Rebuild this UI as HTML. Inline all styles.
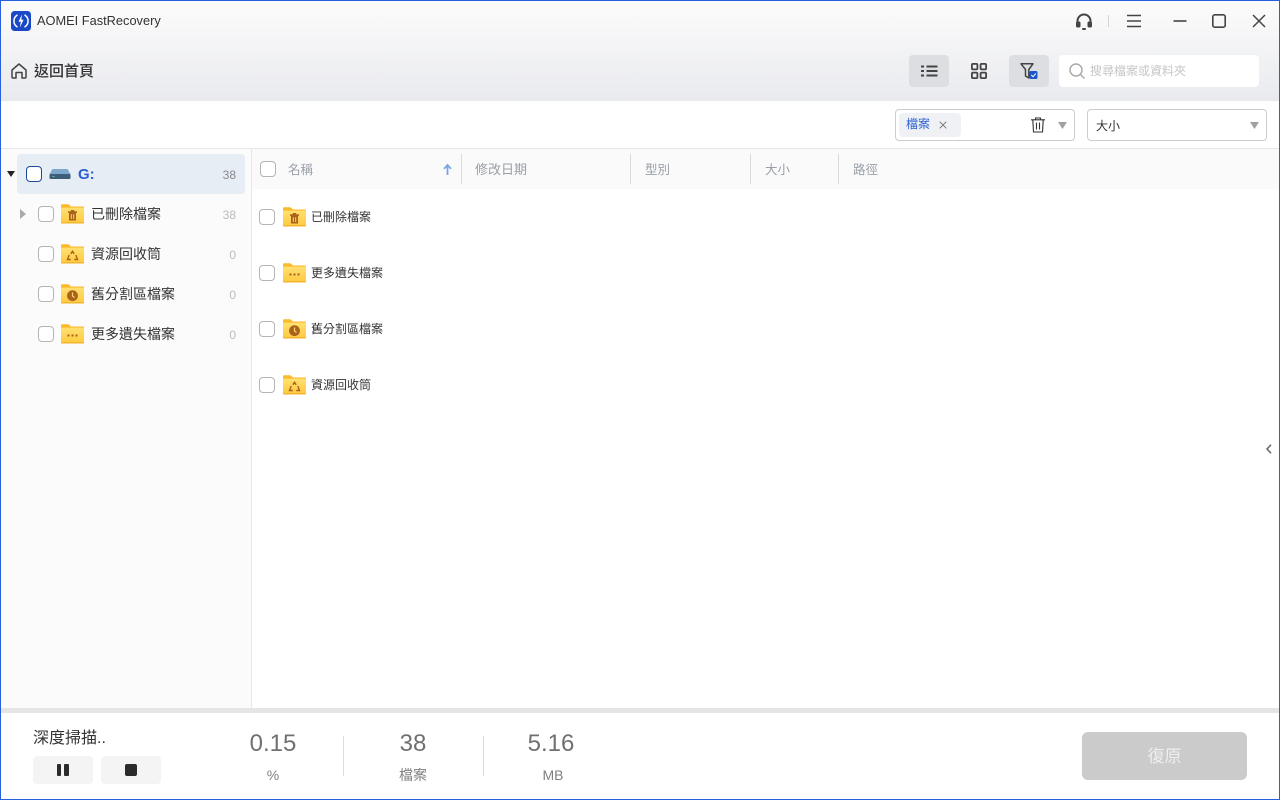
<!DOCTYPE html>
<html lang="zh-Hant"><head><meta charset="utf-8"><title>AOMEI FastRecovery</title>
<style>
*{box-sizing:border-box}
html,body{margin:0;padding:0;width:1280px;height:800px;overflow:hidden;background:#fff}
body{position:relative;font-family:"Liberation Sans","Noto Sans CJK TC",sans-serif;color:#333}
.a{position:absolute;white-space:nowrap}
.cb{position:absolute;width:16px;height:16px;border:1px solid #b4b4b4;border-radius:4px;background:#fff}
.t{position:absolute;white-space:nowrap;font-size:14px;line-height:20px;color:#333}
.r{position:absolute;white-space:nowrap;font-size:12px;line-height:20px;color:#333}
.n{position:absolute;right:1044px;font-size:12px;line-height:16px;color:#aaa;text-align:right}
.h{position:absolute;top:160px;font-size:13px;line-height:20px;color:#9aa0a8;white-space:nowrap}
.sep{position:absolute;top:154px;width:1px;height:30px;background:#d8dbe0}
.big{position:absolute;width:100px;text-align:center;font-size:24px;line-height:30px;color:#707070}
.sm{position:absolute;width:100px;text-align:center;font-size:14px;line-height:20px;color:#808080}
svg{position:absolute;display:block;overflow:visible}
</style></head><body>
<svg width="0" height="0" style="position:absolute"><defs>
<linearGradient id="fg" x1="0" y1="0" x2="0" y2="1"><stop offset="0" stop-color="#ffe070"/><stop offset="1" stop-color="#ffc93f"/></linearGradient>
<g id="fd"><path d="M0 1.500Q0 .3 1.200 .3H7.500L10 2.500H21.800Q23 2.500 23 3.700V18Q23 19.500 21.500 19.500H1.500Q0 19.500 0 18Z" fill="#fbb92c"/><path d="M0 3.600H21.800Q23 3.600 23 4.800V18Q23 19.500 21.500 19.500H1.500Q0 19.500 0 18Z" fill="url(#fg)"/><path d="M0 18.200H23Q23 19.500 21.500 19.500H1.500Q0 19.500 0 18.200Z" fill="#f3b02a"/></g>
<g id="tr"><use href="#fd"/><rect x="7" y="7.300" width="9" height="1.500" fill="#a9621b"/><rect x="9.800" y="6" width="3.400" height="1.600" fill="#a9621b"/><path d="M8 8.500H15V16.500H8Z" fill="#a9621b"/><path d="M10.300 10.300V15M12.700 10.300V15" stroke="#ffd968" stroke-width="1"/></g>
<g id="re"><use href="#fd"/><path d="M9.800 9.800L11.500 7.300L13.200 9.800M14.800 11L16.500 15.500H13.300M9.800 15.500H6.500L8.200 11" fill="none" stroke="#a9621b" stroke-width="1.400"/></g>
<g id="cl"><use href="#fd"/><circle cx="11.500" cy="11.700" r="5.400" fill="#a9621b"/><path d="M11.500 8.500V12L13.500 13.500" fill="none" stroke="#ffd968" stroke-width="1.200"/></g>
<g id="mo"><use href="#fd"/><rect x="6.500" y="10.500" width="2" height="2" fill="#a9621b"/><rect x="10.500" y="10.500" width="2" height="2" fill="#a9621b"/><rect x="14.500" y="10.500" width="2" height="2" fill="#a9621b"/></g>
</defs></svg>

<!-- header -->
<div class="a" style="left:0;top:0;width:1280px;height:101px;background:linear-gradient(#fcfcfc,#e9eaee)"></div>
<svg style="left:11px;top:11px" width="20" height="20" viewBox="0 0 20 20"><rect width="20" height="20" rx="3.500" fill="#1a49c8"/><path d="M6 4.200A7 7 0 0 0 6 15.800M14 4.200A7 7 0 0 1 14 15.800" fill="none" stroke="#fff" stroke-width="1.500" stroke-linecap="round"/><path d="M11 3.500L7.500 10.800H9.800L8.800 16.500L12.600 8.800H10.300Z" fill="#fff"/></svg>
<div class="a" style="left:37px;top:11px;font-size:12.800px;line-height:20px;color:#333">AOMEI FastRecovery</div>
<svg style="left:11px;top:63px" width="16" height="16" viewBox="0 0 16 16"><path d="M1 7L8 1L15 7V14A1 1 0 0 1 14 15H11V9.500H5V15H2A1 1 0 0 1 1 14Z" fill="none" stroke="#444" stroke-width="1.500" stroke-linejoin="round"/></svg>
<div class="a" style="left:34px;top:62px;font-size:15px;line-height:20px;font-weight:500;color:#333">返回首頁</div>

<svg style="left:1075px;top:13px" width="18" height="18" viewBox="0 0 18 18"><path d="M2.500 10V8A6.500 6.500 0 0 1 15.500 8V10" fill="none" stroke="#444" stroke-width="2"/><rect x="1" y="8.500" width="4.500" height="6" rx="1.500" fill="#444"/><rect x="12.500" y="8.500" width="4.500" height="6" rx="1.500" fill="#444"/><rect x="7" y="15" width="4" height="2" rx="1" fill="#444"/></svg>
<div class="a" style="left:1108px;top:15px;width:1px;height:12px;background:#d5d5d5"></div>
<svg style="left:1126px;top:14px" width="16" height="14" viewBox="0 0 16 14"><path d="M1 1.500H15M1 7H15M1 12.500H15" stroke="#444" stroke-width="1.500"/></svg>
<svg style="left:1172px;top:20px" width="16" height="2" viewBox="0 0 16 2"><path d="M1.500 1H14.500" stroke="#444" stroke-width="1.600"/></svg>
<svg style="left:1212px;top:14px" width="14" height="14" viewBox="0 0 14 14"><rect x=".8" y=".8" width="12.400" height="12.400" rx="2" fill="none" stroke="#444" stroke-width="1.600"/></svg>
<svg style="left:1252px;top:14px" width="14" height="14" viewBox="0 0 14 14"><path d="M1 1L13 13M13 1L1 13" stroke="#444" stroke-width="1.500"/></svg>

<div class="a" style="left:909px;top:55px;width:40px;height:32px;background:#dcdee1;border-radius:4px"></div>
<svg style="left:921px;top:65px" width="17" height="12" viewBox="0 0 17 12"><path d="M0 1.500H3M0 6H3M0 10.500H3M5.500 1.500H16.500M5.500 6H16.500M5.500 10.500H16.500" stroke="#444" stroke-width="2"/></svg>
<svg style="left:971px;top:63px" width="16" height="16" viewBox="0 0 16 16"><g fill="none" stroke="#444" stroke-width="1.800"><rect x=".9" y=".9" width="5.500" height="5.500" rx="1"/><rect x="9.600" y=".9" width="5.500" height="5.500" rx="1"/><rect x=".9" y="9.600" width="5.500" height="5.500" rx="1"/><rect x="9.600" y="9.600" width="5.500" height="5.500" rx="1"/></g></svg>
<div class="a" style="left:1009px;top:55px;width:40px;height:32px;background:#dcdee1;border-radius:4px"></div>
<svg style="left:1020px;top:63px" width="19" height="17" viewBox="0 0 19 17"><path d="M1 .8H13L8.800 6.500V15L5.500 13V6.500Z" fill="none" stroke="#444" stroke-width="1.500" stroke-linejoin="round"/><rect x="9.500" y="8" width="8" height="8" rx="1.500" fill="#1f55cc"/><path d="M11.300 12L13 13.700L15.800 10.500" fill="none" stroke="#fff" stroke-width="1"/></svg>
<div class="a" style="left:1059px;top:55px;width:200px;height:32px;background:#fff;border-radius:4px"></div>
<svg style="left:1069px;top:63px" width="17" height="17" viewBox="0 0 17 17"><circle cx="7" cy="7" r="6" fill="none" stroke="#aaa" stroke-width="1.500"/><path d="M11.500 11.500L15.500 15.500" stroke="#aaa" stroke-width="1.500"/></svg>
<div class="a" style="left:1090px;top:62px;font-size:12px;line-height:18px;color:#c6c6c6">搜尋檔案或資料夾</div>

<!-- filter row -->
<div class="a" style="left:895px;top:109px;width:180px;height:32px;border:1px solid #ccc;border-radius:4px;background:#fff"></div>
<div class="a" style="left:899px;top:113px;width:62px;height:24px;background:#eff1f5;border-radius:4px"></div>
<div class="a" style="left:906px;top:116px;font-size:12px;line-height:17px;color:#2a5fd0">檔案</div>
<svg style="left:939px;top:121px" width="8" height="8" viewBox="0 0 8 8"><path d="M.7 .7L7.300 7.300M7.300 .7L.7 7.300" stroke="#777" stroke-width="1"/></svg>
<svg style="left:1031px;top:117px" width="14" height="16" viewBox="0 0 14 16"><path d="M0 2.800H14M4.500 2.800V1H9.500V2.800M1.800 2.800L2.500 15H11.500L12.200 2.800M5.500 5.500V12.500M8.500 5.500V12.500" fill="none" stroke="#333" stroke-width="1.100"/></svg>
<svg style="left:1058px;top:122px" width="9" height="7" viewBox="0 0 9 7"><path d="M0 0H9L4.500 7Z" fill="#a0a0a0"/></svg>
<div class="a" style="left:1087px;top:109px;width:180px;height:32px;border:1px solid #ccc;border-radius:4px;background:#fff"></div>
<div class="a" style="left:1096px;top:117px;font-size:12px;line-height:18px;color:#333">大小</div>
<svg style="left:1250px;top:122px" width="9" height="7" viewBox="0 0 9 7"><path d="M0 0H9L4.500 7Z" fill="#a0a0a0"/></svg>
<div class="a" style="left:0;top:148px;width:1280px;height:1px;background:#e6e7ee"></div>

<!-- sidebar -->
<div class="a" style="left:0;top:149px;width:252px;height:560px;background:#fbfbfb;border-right:1px solid #e6e7ee"></div>
<div class="a" style="left:17px;top:154px;width:228px;height:40px;background:#e7edf5;border-radius:4px"></div>
<svg style="left:7px;top:171px" width="8" height="6" viewBox="0 0 8 6"><path d="M0 0H8L4 6Z" fill="#222"/></svg>
<div class="cb" style="left:26px;top:166px;border-color:#1c4a9c"></div>
<svg style="left:49px;top:169px" width="22" height="10" viewBox="0 0 22 10"><path d="M3.500 0H18.500L21.500 5H.5Z" fill="#7fa9cc"/><rect x=".5" y="5" width="21" height="5" rx="1" fill="#3d5d78"/><rect x="3.500" y="7" width="2" height="1" fill="#4fd0a0"/></svg>
<div class="a" style="left:78px;top:165px;font-size:15px;line-height:20px;font-weight:bold;color:#2a5fd0">G:</div>
<div class="n" style="top:167px;color:#888">38</div>

<svg style="left:20px;top:209px" width="6" height="10" viewBox="0 0 6 10"><path d="M0 0L6 5L0 10Z" fill="#aaa"/></svg>
<div class="cb" style="left:38px;top:206px"></div>
<svg style="left:61px;top:204px" width="23" height="20" viewBox="0 0 23 20"><use href="#tr"/></svg>
<div class="t" style="left:91px;top:204px">已刪除檔案</div><div class="n" style="top:207px;color:#bbb">38</div>

<div class="cb" style="left:38px;top:246px"></div>
<svg style="left:61px;top:244px" width="23" height="20" viewBox="0 0 23 20"><use href="#re"/></svg>
<div class="t" style="left:91px;top:244px">資源回收筒</div><div class="n" style="top:247px;color:#bbb">0</div>

<div class="cb" style="left:38px;top:286px"></div>
<svg style="left:61px;top:284px" width="23" height="20" viewBox="0 0 23 20"><use href="#cl"/></svg>
<div class="t" style="left:91px;top:284px">舊分割區檔案</div><div class="n" style="top:287px;color:#bbb">0</div>

<div class="cb" style="left:38px;top:326px"></div>
<svg style="left:61px;top:324px" width="23" height="20" viewBox="0 0 23 20"><use href="#mo"/></svg>
<div class="t" style="left:91px;top:324px">更多遺失檔案</div><div class="n" style="top:327px;color:#bbb">0</div>

<!-- table head -->
<div class="a" style="left:252px;top:149px;width:1027px;height:40px;background:#fafafa"></div>
<div class="cb" style="left:260px;top:161px"></div>
<div class="h" style="left:288px;font-size:12.500px">名稱</div>
<svg style="left:443px;top:164px" width="9" height="11" viewBox="0 0 9 11"><path d="M4.500 11V2M1 4.800L4.500 1L8 4.800" fill="none" stroke="#7ba7e0" stroke-width="1.800"/></svg>
<div class="sep" style="left:461px"></div><div class="h" style="left:475px">修改日期</div>
<div class="sep" style="left:630px"></div><div class="h" style="left:645px;font-size:12.500px">型別</div>
<div class="sep" style="left:750px"></div><div class="h" style="left:765px;font-size:12.500px">大小</div>
<div class="sep" style="left:838px"></div><div class="h" style="left:853px;font-size:12.500px">路徑</div>

<!-- rows -->
<div class="cb" style="left:259px;top:209px"></div>
<svg style="left:283px;top:207px" width="23" height="20" viewBox="0 0 23 20"><use href="#tr"/></svg>
<div class="r" style="left:311px;top:207px">已刪除檔案</div>
<div class="cb" style="left:259px;top:265px"></div>
<svg style="left:283px;top:263px" width="23" height="20" viewBox="0 0 23 20"><use href="#mo"/></svg>
<div class="r" style="left:311px;top:263px">更多遺失檔案</div>
<div class="cb" style="left:259px;top:321px"></div>
<svg style="left:283px;top:319px" width="23" height="20" viewBox="0 0 23 20"><use href="#cl"/></svg>
<div class="r" style="left:311px;top:319px">舊分割區檔案</div>
<div class="cb" style="left:259px;top:377px"></div>
<svg style="left:283px;top:375px" width="23" height="20" viewBox="0 0 23 20"><use href="#re"/></svg>
<div class="r" style="left:311px;top:375px">資源回收筒</div>

<svg style="left:1266px;top:444px" width="6" height="10" viewBox="0 0 6 10"><path d="M5 .8L1 5L5 9.200" fill="none" stroke="#666" stroke-width="1.500"/></svg>

<!-- footer -->
<div class="a" style="left:0;top:708px;width:1280px;height:5px;background:#e5e5e5"></div>
<div class="a" style="left:33px;top:728px;font-size:16px;line-height:22px;color:#333">深度掃描..</div>
<div class="a" style="left:33px;top:756px;width:60px;height:28px;background:#f4f4f4;border-radius:4px"></div>
<div class="a" style="left:57px;top:764px;width:4px;height:12px;background:#2b2b2b;border-radius:1px"></div>
<div class="a" style="left:64px;top:764px;width:5px;height:12px;background:#2b2b2b;border-radius:1px"></div>
<div class="a" style="left:101px;top:756px;width:60px;height:28px;background:#f4f4f4;border-radius:4px"></div>
<div class="a" style="left:125px;top:764px;width:12px;height:12px;background:#2b2b2b;border-radius:2px"></div>

<div class="big" style="left:223px;top:729px">0.15</div><div class="sm" style="left:223px;top:765px">%</div>
<div class="a" style="left:343px;top:736px;width:1px;height:40px;background:#dcdcdc"></div>
<div class="big" style="left:363px;top:729px">38</div><div class="sm" style="left:363px;top:765px">檔案</div>
<div class="a" style="left:483px;top:736px;width:1px;height:40px;background:#dcdcdc"></div>
<div class="big" style="left:501px;top:729px">5.16</div><div class="sm" style="left:503px;top:765px">MB</div>

<div class="a" style="left:1082px;top:732px;width:165px;height:48px;background:#cbcbcb;border-radius:6px;text-align:center;font-size:17px;line-height:49px;color:#eee">復原</div>

<!-- window border -->
<div class="a" style="left:0;top:0;width:1280px;height:800px;border:1px solid #2a5ee0;pointer-events:none"></div>
</body></html>
